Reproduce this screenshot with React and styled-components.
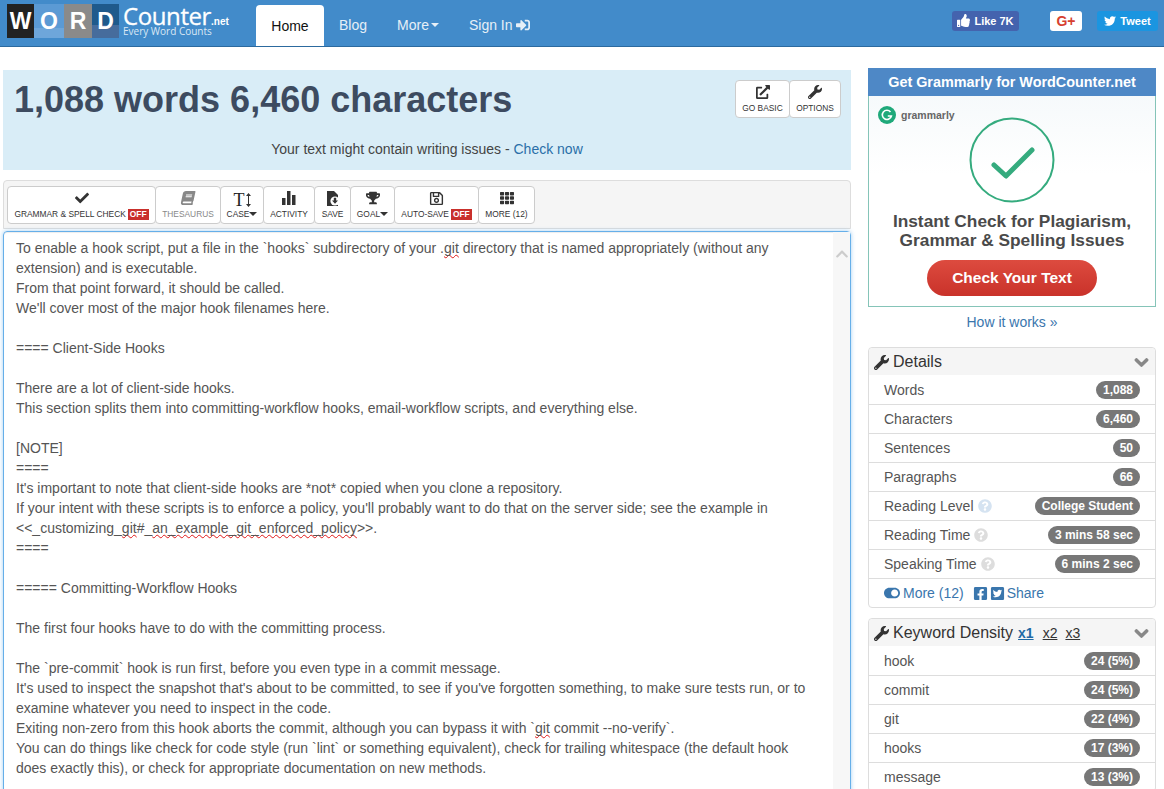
import React from 'react';
import styled, { createGlobalStyle } from 'styled-components';
import {
  FaCheck, FaBook, FaTrophy, FaRegSave, FaTh, FaWrench,
  FaChevronDown, FaQuestionCircle, FaToggleOn, FaFacebookSquare, FaTwitterSquare,
  FaThumbsUp, FaTwitter, FaSignInAlt, FaExternalLinkAlt,
} from 'react-icons/fa';

const GlobalStyle = createGlobalStyle`
  html, body {
    margin: 0;
    height: 789px;
    overflow: hidden;
    background: #fff;
    font-family: "Liberation Sans", Arial, sans-serif;
    font-size: 14px;
    color: #555;
  }
  * { box-sizing: border-box; }
`;

// Navbar
const Navbar = styled.nav`
  height: 47px;
  background: #428bca;
  border-bottom: 1px solid #2c6a9f;
  display: flex;
  align-items: flex-end;
  padding-left: 7px;
`;

const Logo = styled.div`
  display: flex;
  align-items: center;
  width: 249px;
  height: 46px;
  padding-bottom: 4px;
`;

const Tile = styled.span`
  width: ${props => props.w}px;
  height: 34px;
  background: ${props => props.bg};
  color: #fff;
  font-weight: bold;
  font-size: 23px;
  display: flex;
  align-items: center;
  justify-content: center;
`;

const LogoText = styled.div`
  margin: 0 0 0 4px;
  color: #fff;
  display: flex;
  flex-direction: column;
`;

const LogoName = styled.div`
  font-family: "Open Sans", sans-serif;
  font-size: 24px;
  line-height: 20px;
  letter-spacing: -0.4px;
  white-space: nowrap;
  -webkit-text-stroke: 0.3px #fff;
  small {
    font-size: 10px;
    font-weight: bold;
    letter-spacing: 0;
    font-family: "Liberation Sans", sans-serif;
    -webkit-text-stroke: 0;
  }
`;

const LogoTag = styled.div`
  margin-top: -6px;
  font-family: "Open Sans", sans-serif;
  font-size: 10px;
  line-height: 10px;
  color: #dbe8f4;
  white-space: nowrap;
`;

const NavTab = styled.a`
  height: 41px;
  width: ${props => props.active ? '68px' : 'auto'};
  padding: ${props => props.active ? '0' : '0 15px 1px'};
  display: flex;
  align-items: center;
  justify-content: center;
  font-size: 14px;
  border-radius: 4px 4px 0 0;
  background: ${props => props.active ? '#fff' : 'transparent'};
  color: ${props => props.active ? '#111' : '#e6eff7'};
  svg { margin-left: 3px; }
`;

const Caret = styled.span`
  display: inline-block;
  width: 0;
  height: 0;
  margin-left: ${props => props.gap}px;
  vertical-align: 1px;
  border-left: 4px solid transparent;
  border-right: 4px solid transparent;
  border-top: 4px solid currentColor;
`;

const Social = styled.div`
  margin-left: auto;
  height: 46px;
  display: flex;
  align-items: center;
  padding: 0 6px 5px 0;
`;

const SocialButton = styled.a`
  height: 20px;
  margin-left: ${props => props.gap}px;
  width: ${props => props.w}px;
  display: flex;
  align-items: center;
  justify-content: center;
  gap: 4px;
  border-radius: 3px;
  font-size: ${props => props.size || 11}px;
  font-weight: bold;
  color: ${props => props.fg || '#fff'};
  background: ${props => props.bg};
`;

// Page layout
const Main = styled.div`
  display: grid;
  grid-template-columns: 848px 288px;
  column-gap: 17px;
  padding: 0 0 0 3px;
`;

const Left = styled.div`
  padding-top: 23px;
`;

const Right = styled.aside`
  padding-top: 21px;
`;

// Counter banner
const Banner = styled.section`
  position: relative;
  height: 100px;
  background: #d9edf7;
`;

const Counts = styled.h1`
  margin: 0;
  padding: 10px 0 0 11px;
  font-size: 36px;
  line-height: 40px;
  font-weight: bold;
  color: #3d4b60;
`;

const BannerNote = styled.p`
  margin: 19px 0 0;
  text-align: center;
  font-size: 14px;
  line-height: 20px;
  color: #444;
  a { color: #2a6fa8; }
`;

const BannerTools = styled.div`
  position: absolute;
  top: 10px;
  right: 10px;
  display: flex;
`;

const ToolButton = styled.div`
  height: 38px;
  width: ${props => props.w}px;
  margin-left: -1px;
  padding: 4px 0 3px;
  background: #fff;
  border: 1px solid #ccc;
  border-radius: 4px;
  display: flex;
  flex-direction: column;
  align-items: center;
  justify-content: space-between;
  font-size: 8.4px;
  line-height: 11px;
  color: ${props => props.muted ? '#888' : '#333'};
  white-space: nowrap;
  svg { font-size: ${props => props.icon || 14}px; }
`;

const OffTag = styled.span`
  display: inline-block;
  background: #c9302c;
  color: #fff;
  font-weight: bold;
  padding: 0 2px;
  margin-left: 2px;
`;

const BookIcon = styled(FaBook)`
  transform: skewX(-12deg);
`;

const CaseIcon = styled.span`
  height: 18px;
  display: flex;
  align-items: center;
  font-family: "Liberation Serif", serif;
  font-size: 18px;
  line-height: 18px;
  color: #222;
  svg { width: 5px; height: 14px; margin-left: 1px; }
`;

// Toolbar
const Toolbar = styled.div`
  height: 49px;
  margin-top: 10px;
  padding: 5px 4px;
  display: flex;
  background: #f5f5f5;
  border: 1px solid #ddd;
  border-radius: 4px 4px 0 0;
`;

// Editor
const Editor = styled.div`
  position: relative;
  height: 570px;
  margin-top: 2px;
  padding: 6px 0 0 12px;
  border: 1px solid #66afe9;
  border-radius: 4px;
  box-shadow: inset 0 1px 1px rgba(0, 0, 0, 0.075), 0 0 4px rgba(102, 175, 233, 0.6);
  font-size: 14px;
  line-height: 20px;
  color: #555;
`;

const Line = styled.div`
  min-height: 20px;
  white-space: pre;
`;

const Typo = styled.span`
  text-decoration: underline wavy #e01818;
  text-decoration-thickness: 1px;
  text-decoration-skip-ink: none;
  text-underline-offset: 1px;
`;

const ScrollTrack = styled.div`
  position: absolute;
  top: 0;
  right: 0;
  bottom: 0;
  width: 17px;
  background: #f7f7f7;
  color: #ccc;
  display: flex;
  justify-content: center;
  padding-top: 15px;
  font-size: 14px;
  svg { transform: rotate(180deg); }
`;

// Grammarly ad
const Ad = styled.div`
  height: 239px;
  border: 1px solid #85c4b8;
  border-top: none;
  display: flex;
  flex-direction: column;
  align-items: center;
  background: linear-gradient(#f3f8fa, #fff 45%);
`;

const AdHead = styled.div`
  align-self: stretch;
  margin: 0 -1px;
  height: 28px;
  background: #4e88c6;
  color: #fff;
  font-size: 14.4px;
  font-weight: bold;
  display: flex;
  align-items: center;
  justify-content: center;
`;

const AdBrand = styled.div`
  align-self: flex-start;
  display: flex;
  align-items: center;
  gap: 5px;
  margin: 10px 0 0 9px;
  height: 18px;
  color: #666;
  font-size: 10.5px;
  font-weight: bold;
`;

const AdCheck = styled.svg`
  width: 86px;
  height: 86px;
  margin-top: -7px;
`;

const AdTitle = styled.div`
  margin-top: 9px;
  text-align: center;
  font-size: 17.3px;
  line-height: 19px;
  font-weight: bold;
  color: #4a4a4a;
`;

const AdButton = styled.div`
  margin-top: 10px;
  width: 170px;
  height: 36px;
  border-radius: 18px;
  background: linear-gradient(#dd4b3f, #c9322a);
  color: #fff;
  font-size: 15.5px;
  font-weight: bold;
  display: flex;
  align-items: center;
  justify-content: center;
`;

const HowLink = styled.a`
  display: block;
  margin-top: 5px;
  text-align: center;
  line-height: 20px;
  color: #3a76ad;
`;

// Side panels
const Panel = styled.section`
  margin-top: ${props => props.mt}px;
  border: 1px solid #ddd;
  border-radius: 4px;
  background: #fff;
`;

const PanelHead = styled.header`
  height: 27px;
  padding: 1px 6px 0 5px;
  display: flex;
  align-items: center;
  gap: 4px;
  background: #f5f5f5;
  border-radius: 4px 4px 0 0;
  font-size: 16px;
  color: #333;
`;

const Chevron = styled(FaChevronDown)`
  margin-left: auto;
  color: #888;
  font-size: 15px;
  stroke: currentColor;
  stroke-width: 40;
`;

const Density = styled.a`
  font-size: 14px;
  margin-left: ${props => props.gap}px;
  text-decoration: underline;
  font-weight: ${props => props.active ? 'bold' : 'normal'};
  color: ${props => props.active ? '#1f6aa5' : '#333'};
`;

const Row = styled.div`
  height: 29px;
  padding: 0 15px;
  display: flex;
  align-items: center;
  border-top: ${props => props.first ? 'none' : '1px solid #ddd'};
  color: #555;
`;

const Badge = styled.span`
  margin-left: auto;
  min-width: 10px;
  padding: 3px 7px;
  border-radius: 10px;
  background: #777;
  color: #fff;
  font-size: 12px;
  line-height: 12px;
  font-weight: bold;
`;

const Help = styled(FaQuestionCircle)`
  margin-left: 4px;
  font-size: 14px;
  color: ${props => props.tint};
`;

const SideLink = styled.a`
  display: flex;
  align-items: center;
  gap: ${props => props.gap}px;
  margin-right: 9px;
  font-size: 14px;
  color: #3a76ad;
  svg { font-size: ${props => props.icon}px; flex: none; }
`;

const lines = [
  'To enable a hook script, put a file in the `hooks` subdirectory of your .|git| directory that is named appropriately (without any',
  'extension) and is executable.',
  'From that point forward, it should be called.',
  "We'll cover most of the major hook filenames here.",
  '',
  '==== Client-Side Hooks',
  '',
  'There are a lot of client-side hooks.',
  'This section splits them into committing-workflow hooks, email-workflow scripts, and everything else.',
  '',
  '[NOTE]',
  '====',
  "It's important to note that client-side hooks are *not* copied when you clone a repository.",
  "If your intent with these scripts is to enforce a policy, you'll probably want to do that on the server side; see the example in",
  '<<_customizing_|git|#_|an_example_git_enforced_policy|>>.',
  '====',
  '',
  '===== Committing-Workflow Hooks',
  '',
  'The first four hooks have to do with the committing process.',
  '',
  'The `pre-commit` hook is run first, before you even type in a commit message.',
  "It's used to inspect the snapshot that's about to be committed, to see if you've forgotten something, to make sure tests run, or to",
  'examine whatever you need to inspect in the code.',
  'Exiting non-zero from this hook aborts the commit, although you can bypass it with `|git| commit --no-verify`.',
  'You can do things like check for code style (run `lint` or something equivalent), check for trailing whitespace (the default hook',
  'does exactly this), or check for appropriate documentation on new methods.',
];

const details = [
  ['Words', '1,088'],
  ['Characters', '6,460'],
  ['Sentences', '50'],
  ['Paragraphs', '66'],
  ['Reading Level', 'College Student', '#d5e3f1'],
  ['Reading Time', '3 mins 58 sec', '#ddd'],
  ['Speaking Time', '6 mins 2 sec', '#ddd'],
];

const keywords = [
  ['hook', '24 (5%)'],
  ['commit', '24 (5%)'],
  ['git', '22 (4%)'],
  ['hooks', '17 (3%)'],
  ['message', '13 (3%)'],
];

const BarsIcon = () => (
  <svg width="14" height="14" viewBox="0 0 14 14" fill="currentColor">
    <rect x="0" y="7" width="3.5" height="7" />
    <rect x="5" y="0" width="3.5" height="14" />
    <rect x="10" y="4" width="3.5" height="10" />
  </svg>
);

const SaveFileIcon = () => (
  <svg width="14" height="15" viewBox="0 0 14 15">
    <path d="M1 0 H8 L12 4 V15 H1 Z" fill="#333" />
    <circle cx="9" cy="10" r="4.6" fill="#fff" />
    <path d="M7.8 6.8 H10.2 V9.6 H12 L9 12.8 L6 9.6 H7.8 Z" fill="#333" />
  </svg>
);

const App = () => (
  <>
    <GlobalStyle />
    <Navbar>
      <Logo>
        <Tile w={27} bg="#222">W</Tile>
        <Tile w={30} bg="linear-gradient(#5b9ad4 70%, #6ea6da 70%)">O</Tile>
        <Tile w={28} bg="#8a8a8a">R</Tile>
        <Tile w={27} bg="linear-gradient(#1f5a8c 62%, #466c9c 62%)">D</Tile>
        <LogoText>
          <LogoName>Counter<small>.net</small></LogoName>
          <LogoTag>Every Word Counts</LogoTag>
        </LogoText>
      </Logo>
      <NavTab active>Home</NavTab>
      <NavTab>Blog</NavTab>
      <NavTab>More<Caret gap={2} /></NavTab>
      <NavTab>Sign In <FaSignInAlt /></NavTab>
      <Social>
        <SocialButton gap={0} w={67} bg="#4463ae"><FaThumbsUp size={13} /> Like 7K</SocialButton>
        <SocialButton gap={31} w={32} size={14} bg="#fff" fg="#d6402f">G+</SocialButton>
        <SocialButton gap={15} w={61} bg="#1b95e0"><FaTwitter size={12} /> Tweet</SocialButton>
      </Social>
    </Navbar>

    <Main>
      <Left>
        <Banner>
          <Counts>1,088 words 6,460 characters</Counts>
          <BannerNote>Your text might contain writing issues - <a>Check now</a></BannerNote>
          <BannerTools>
            <ToolButton w={55}><FaExternalLinkAlt />GO BASIC</ToolButton>
            <ToolButton w={52}><FaWrench />OPTIONS</ToolButton>
          </BannerTools>
        </Banner>

        <Toolbar>
          <ToolButton w={149}><FaCheck /><span>GRAMMAR &amp; SPELL CHECK<OffTag>OFF</OffTag></span></ToolButton>
          <ToolButton w={66} muted><BookIcon />THESAURUS</ToolButton>
          <ToolButton w={44}>
            <CaseIcon>
              T
              <svg viewBox="0 0 5 14" fill="#333">
                <path d="M2.5 0 L5 3 H3 V11 H5 L2.5 14 L0 11 H2 V3 H0 Z" />
              </svg>
            </CaseIcon>
            <span>CASE<Caret gap={0} /></span>
          </ToolButton>
          <ToolButton w={52}><BarsIcon />ACTIVITY</ToolButton>
          <ToolButton w={37}><SaveFileIcon />SAVE</ToolButton>
          <ToolButton w={45}><FaTrophy /><span>GOAL<Caret gap={0} /></span></ToolButton>
          <ToolButton w={85} icon={15}><FaRegSave /><span>AUTO-SAVE<OffTag>OFF</OffTag></span></ToolButton>
          <ToolButton w={57}><FaTh />MORE (12)</ToolButton>
        </Toolbar>

        <Editor>
          {lines.map((line, index) => (
            <Line key={index}>
              {line.split('|').map((part, i) => (i % 2 ? <Typo key={i}>{part}</Typo> : part))}
            </Line>
          ))}
          <ScrollTrack><FaChevronDown /></ScrollTrack>
        </Editor>
      </Left>

      <Right>
        <Ad>
          <AdHead>Get Grammarly for WordCounter.net</AdHead>
          <AdBrand>
            <svg width="18" height="18" viewBox="0 0 18 18">
              <circle cx="9" cy="9" r="9" fill="#1fa97a" />
              <path d="M12.5 6 A4.6 4.6 0 1 0 13.4 10 H9.8" fill="none" stroke="#fff" strokeWidth="1.6" />
            </svg>
            grammarly
          </AdBrand>
          <AdCheck viewBox="0 0 86 86">
            <circle cx="43" cy="43" r="41.5" fill="none" stroke="#35ab7e" strokeWidth="2" />
            <path d="M25 48 L37 59 L63 33" fill="none" stroke="#35ab7e" strokeWidth="5" strokeLinecap="round" strokeLinejoin="round" />
          </AdCheck>
          <AdTitle>Instant Check for Plagiarism,<br />Grammar &amp; Spelling Issues</AdTitle>
          <AdButton>Check Your Text</AdButton>
        </Ad>
        <HowLink>How it works »</HowLink>

        <Panel mt={15}>
          <PanelHead><FaWrench size={15} />Details<Chevron /></PanelHead>
          {details.map(([label, value, tint], index) => (
            <Row key={label} first={index === 0}>
              {label}
              {tint && <Help tint={tint} />}
              <Badge>{value}</Badge>
            </Row>
          ))}
          <Row>
            <SideLink gap={3} icon={16}><FaToggleOn />More (12)</SideLink>
            <SideLink gap={2} icon={15}><FaFacebookSquare /><FaTwitterSquare /><span>Share</span></SideLink>
          </Row>
        </Panel>

        <Panel mt={10}>
          <PanelHead>
            <FaWrench size={15} />Keyword Density
            <Density active gap={1}>x1</Density>
            <Density gap={5}>x2</Density>
            <Density gap={4}>x3</Density>
            <Chevron />
          </PanelHead>
          {keywords.map(([word, value], index) => (
            <Row key={word} first={index === 0}>
              {word}
              <Badge>{value}</Badge>
            </Row>
          ))}
        </Panel>
      </Right>
    </Main>
  </>
);

export default App;
